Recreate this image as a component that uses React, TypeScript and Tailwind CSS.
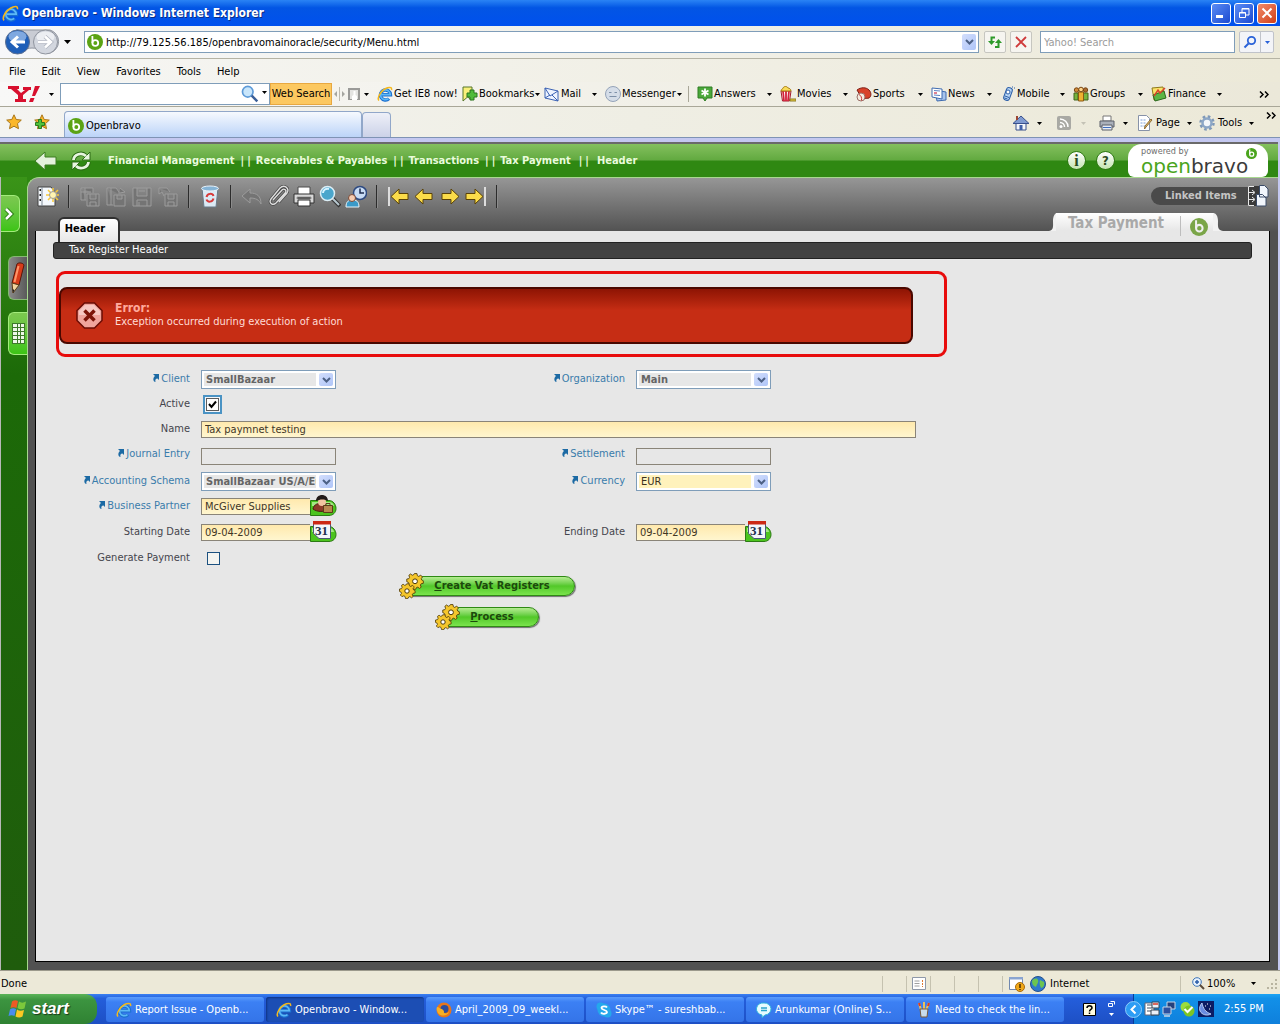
import type { ReactNode } from 'react'
import clsx from 'clsx'

/* ---------- Small shared pieces ---------- */

function Svg({ w = 16, h = 16, box, className, children }: { w?: number; h?: number; box?: string; className?: string; children: ReactNode }) {
  return (
    <svg width={w} height={h} viewBox={box ?? `0 0 ${w} ${h}`} fill="none" className={clsx('shrink-0', className)} aria-hidden="true">
      {children}
    </svg>
  )
}

function Caret({ className = 'text-black' }: { className?: string }) {
  return (
    <Svg w={5} h={3} className={className}>
      <path d="M0 0h5L2.500 3z" fill="currentColor" />
    </Svg>
  )
}

function IeIcon({ size = 16 }: { size?: number }) {
  return (
    <Svg w={size} h={size} box="0 0 16 16">
      <path d="M4 8.800h9.500A5 5 0 1 0 12 12.600" stroke="#1a6fd0" strokeWidth="3.400" />
      <path d="M4.500 8.600h8.800A4.900 4.900 0 1 0 11.500 12.600" stroke="#5cb8f6" strokeWidth="1.700" />
      <path d="M2 14.500C-.5 12 4 4 10.500 1.800c3-1 4.500 0 4 2.200" stroke="#f5b81c" strokeWidth="1.500" />
    </Svg>
  )
}

function BravoIcon({ size = 16, color = '#5ba314', mark = '#fff' }: { size?: number; color?: string; mark?: string }) {
  return (
    <Svg w={size} h={size} box="0 0 16 16">
      <circle cx="8" cy="8" r="8" fill={color} />
      <circle cx="8.300" cy="9" r="2.900" stroke={mark} strokeWidth="1.800" />
      <path d="M5.400 9V2" stroke={mark} strokeWidth="1.800" />
    </Svg>
  )
}

function Chevrons() {
  return (
    <Svg w={10} h={7}>
      <path d="M1 .5l3 3-3 3M6 .5l3 3-3 3" stroke="#000" strokeWidth="1.500" />
    </Svg>
  )
}

function DropArrow() {
  return (
    <span className="pointer-events-none absolute top-0.5 right-0.5 bottom-0.5 flex w-[14px] items-center justify-center rounded-xs bg-gradient-to-br from-[#d3defc] to-[#afc5f8]">
      <Svg w={9} h={6}>
        <path d="M1 1l3.500 3.500L8 1" stroke="#4d6185" strokeWidth="2" />
      </Svg>
    </span>
  )
}

/* ---------- Browser chrome ---------- */

function TitleBar() {
  return (
    <header className="flex h-[26px] items-center bg-gradient-to-b from-[#2a83f5] via-[#0355e4] via-30% to-[#0050ee] pr-[3px] pl-0.5">
      <IeIcon size={17} />
      <h1 className="ml-[3px] text-[12px] font-bold text-white [text-shadow:1px_1px_0_#0a2d85]">
        Openbravo - Windows Internet Explorer
      </h1>
      <div className="ml-auto flex gap-[3px]">
        <button aria-label="Minimize" className="flex h-[21px] w-5 items-center justify-center rounded-[3px] border border-white bg-gradient-to-br from-[#5c8cf5] to-[#1c48d0]">
          <Svg w={12} h={12}>
            <path d="M1 8h7v3H1z" fill="#fff" />
          </Svg>
        </button>
        <button aria-label="Restore" className="flex h-[21px] w-5 items-center justify-center rounded-[3px] border border-white bg-gradient-to-br from-[#5c8cf5] to-[#1c48d0]">
          <Svg w={12} h={12}>
            <path d="M4 5V1.500h7V8H8M1.500 5.500h6v5h-6zM4 2h7M1.500 6h6" stroke="#fff" />
          </Svg>
        </button>
        <button aria-label="Close" className="flex h-[21px] w-5 items-center justify-center rounded-[3px] border border-white bg-gradient-to-br from-[#f08a68] to-[#d03c10]">
          <Svg w={12} h={12}>
            <path d="M1.500 1.500l9 9M10.500 1.500l-9 9" stroke="#fff" strokeWidth="2" />
          </Svg>
        </button>
      </div>
    </header>
  )
}

function AddressRow() {
  return (
    <div className="flex h-[33px] items-center border-b border-[#b5b3a4] bg-gradient-to-r from-[#f6f7f9] to-[#ece9d8] pr-1.5 pl-1">
      <button aria-label="Back and forward">
        <Svg w={56} h={28}>
          <path d="M12 2h34a12 12 0 0 1 0 23C37 25 36 20 28 20s-8 5-16 5z" fill="#c9ccd4" stroke="#8f949e" />
          <circle cx="13.500" cy="14" r="12" fill="#1f5fb8" stroke="#5b6f92" />
          <ellipse cx="13.500" cy="8.500" rx="9" ry="5.500" fill="#7fa8e0" />
          <path d="M21 14H9M14 8.500L8 14l6 5.500" stroke="#fff" strokeWidth="3" />
          <circle cx="41.500" cy="14" r="12" fill="#d3d7df" stroke="#8f949e" />
          <ellipse cx="41.500" cy="9" rx="9" ry="5.500" fill="#eceef2" />
          <path d="M34 14h12M41 8.500l6 5.500-6 5.500" stroke="#b0b5c0" strokeWidth="4" />
          <path d="M34 14h12M41 8.500l6 5.500-6 5.500" stroke="#fff" strokeWidth="2.500" />
        </Svg>
      </button>
      <span className="ml-1">
        <Svg w={7} h={4}>
          <path d="M0 0h7L3.500 4z" fill="#000" />
        </Svg>
      </span>
      <label className="relative ml-[13px] flex h-[22px] flex-1 items-center border border-[#7f9db9] bg-white pl-0.5">
        <BravoIcon />
        <input aria-label="Address" className="ml-[3px] h-full flex-1 pr-5 outline-none" defaultValue="http://79.125.56.185/openbravomainoracle/security/Menu.html" />
        <DropArrow />
      </label>
      <button aria-label="Refresh" className="ml-[5px] flex h-[22px] w-[22px] items-center justify-center rounded-xs border border-[#c6c6c0] bg-[#f6f5f0]">
        <Svg>
          <path d="M8 3.500H4.500V8" stroke="#2e9a2a" strokeWidth="2" />
          <path d="M1 7h7l-3.500 4z" fill="#2e9a2a" />
          <path d="M8 13h3.500V8.500" stroke="#2e9a2a" strokeWidth="2" />
          <path d="M8 9h7l-3.500-4z" fill="#2e9a2a" />
        </Svg>
      </button>
      <button aria-label="Stop" className="ml-1 flex h-[22px] w-[22px] items-center justify-center rounded-xs border border-[#c6c6c0] bg-[#f6f5f0]">
        <Svg w={12} h={12}>
          <path d="M1 1l10 10M11 1L1 11" stroke="#cf3b3b" strokeWidth="1.800" />
        </Svg>
      </button>
      <input aria-label="Yahoo! Search" placeholder="Yahoo! Search" className="ml-2 h-[22px] w-[195px] border border-[#7f9db9] bg-white px-[3px] placeholder:text-[#9b9b9b]" />
      <div className="ml-1 flex h-[22px] rounded-xs border border-[#c0c3ca] bg-[#f3f4f8]">
        <button aria-label="Search" className="flex w-[21px] items-center justify-center border-r border-[#c0c3ca]">
          <Svg w={14} h={14}>
            <circle cx="8.500" cy="5.500" r="3.700" stroke="#2a62d8" strokeWidth="1.800" />
            <path d="M5.500 8.500L1.500 12.500" stroke="#2a62d8" strokeWidth="2" />
          </Svg>
        </button>
        <button aria-label="Search options" className="flex w-[12px] items-center justify-center">
          <Caret className="text-[#2a62d8]" />
        </button>
      </div>
    </div>
  )
}

function MenuRow() {
  return (
    <nav className="flex h-[23px] items-center gap-4 bg-gradient-to-r from-[#f6f6f4] to-[#ece9d8] pt-0.5 pl-[9px]">
      {['File', 'Edit', 'View', 'Favorites', 'Tools', 'Help'].map((name) => (
        <button key={name}>{name}</button>
      ))}
    </nav>
  )
}

const yahooIcons: Record<string, ReactNode> = {
  Bookmarks: (
    <>
      <path d="M1 1h9v13l-4.500-3L1 15z" fill="#f9f07a" stroke="#57762a" />
      <path d="M8 4h4v3h3v4h-3v3H8v-3H5V7h3z" fill="#4fbb3a" stroke="#2a7420" />
    </>
  ),
  Mail: (
    <>
      <path d="M1 2l13 3v10L1 12z" fill="#eef4ff" stroke="#3b62b4" />
      <path d="M1 2l5 8 8-5M1 12l5-3M14 15L8 9" stroke="#3b62b4" />
    </>
  ),
  Messenger: (
    <>
      <circle cx="8" cy="8" r="7.500" fill="#d5dde8" stroke="#94a3b8" />
      <path d="M4 6.500h2.500M9.500 6.500H12M4.500 10.500h7" stroke="#7e90a8" strokeWidth="1.200" />
    </>
  ),
  Answers: (
    <>
      <path d="M1 1h14v11h-5l-2 3-2-3H1z" fill="#4aa83a" stroke="#2e7d23" />
      <path d="M8 2.500v8M4.500 4.500l7 4M11.500 4.500l-7 4" stroke="#fff" strokeWidth="1.800" />
    </>
  ),
  Movies: (
    <>
      <path d="M1 5h10l-1.500 10h-7z" fill="#fff" stroke="#a01828" />
      <path d="M3 5l1 10M6 5v10M9 5L8 15" stroke="#d3213a" strokeWidth="1.800" />
      <path d="M1 5c0-2 2-2 2-3 1-2 4-2 5 0 1 0 3 1 3 3z" fill="#f8dc5a" stroke="#a87a10" />
      <path d="M10 13h6v2h-6z" fill="#f0d040" stroke="#8a7a20" />
    </>
  ),
  Sports: (
    <>
      <path d="M1 4c4-3 9-3 12 0 3 3 2 7 0 8-3 1-8 0-9-3z" fill="#d8432a" stroke="#7c1c14" />
      <circle cx="5" cy="11" r="4" fill="#f4ecdf" stroke="#9a7068" />
      <path d="M3 8.500c2 1 3 3 2.500 6" stroke="#c33" />
    </>
  ),
  News: (
    <>
      <path d="M4 4l11 2v8L6 15z" fill="#a9c4ec" stroke="#3e6bb0" />
      <path d="M1 2l10 1v10L1 11z" fill="#fff" stroke="#3e6bb0" />
      <path d="M3 4.500l6 .5M3 9l6 .5" stroke="#5c83c4" />
      <path d="M3 6h3v2H3z" fill="#e08090" />
    </>
  ),
  Mobile: (
    <>
      <rect x="5" y="1.500" width="6" height="13" rx="2.500" transform="rotate(20 8 8)" fill="#b7d4f4" stroke="#2c5fa8" />
      <circle cx="8" cy="6" r="2" fill="#fff" stroke="#2c5fa8" />
      <path d="M5 10l4 1.500M4.500 12l3 1M12 1h1M14 2h1" stroke="#2c5fa8" />
    </>
  ),
  Groups: (
    <>
      <path d="M1 7h4v7H1zM10 7h5v7h-5z" fill="#78b43c" stroke="#41641c" />
      <path d="M5.500 6h5v9h-5z" fill="#f0b030" stroke="#8a5a14" />
      <circle cx="3.500" cy="4" r="2.200" fill="#d08a3a" stroke="#7a4612" />
      <circle cx="8" cy="3.500" r="2.300" fill="#ffd48a" stroke="#7a4612" />
      <circle cx="12.500" cy="4" r="2.200" fill="#a86830" stroke="#7a4612" />
    </>
  ),
  Finance: (
    <>
      <path d="M1 2l11-1 2 11-11 2z" fill="#fbe36a" stroke="#8f7a18" />
      <path d="M2 9l11-4 2 7-11 3z" fill="#5cb544" stroke="#2d6a20" />
      <path d="M3 10l4-6 2 3 5-5" stroke="#d8432a" strokeWidth="1.500" />
    </>
  ),
}

const yahooItems = [
  { name: 'Bookmarks', width: 'w-[82px]', tight: true },
  { name: 'Mail', width: 'w-[61px]' },
  { name: 'Messenger', width: 'w-[83px]', tight: true, divider: true },
  { name: 'Answers', width: 'w-[83px]' },
  { name: 'Movies', width: 'w-[76px]' },
  { name: 'Sports', width: 'w-[75px]' },
  { name: 'News', width: 'w-[69px]' },
  { name: 'Mobile', width: 'w-[73px]' },
  { name: 'Groups', width: 'w-[78px]' },
  { name: 'Finance', width: 'w-[79px]' },
]

function YahooBar() {
  return (
    <div className="flex h-[25px] items-center border-b border-[#a9a798] bg-gradient-to-r from-[#f8f8f7] to-[#ebe8d9] pr-[11px]">
      <Svg w={32} h={18} className="ml-2">
        <path d="M0 1h11v3H9l4 4 4-3h-2V2h8v3h-2l-6 5v4h3v3H7v-3h3v-4L3 4H0z" fill="#d8102e" />
        <path d="M27 1h5l-5 10h-3zM22.500 13h4l-1.500 4h-4z" fill="#d8102e" />
      </Svg>
      <span className="ml-[9px]">
        <Caret />
      </span>
      <div className="ml-1.5 flex h-[22px] items-center border border-[#7f9db9] bg-white">
        <input aria-label="Yahoo web search" className="h-full w-[180px] outline-none" />
        <Svg className="h-[18px] w-[18px]">
          <circle cx="6" cy="6" r="4.700" fill="#c9e6fb" stroke="#5e9bd8" strokeWidth="1.500" />
          <path d="M9.500 9.500l5 5" stroke="#3a5f98" strokeWidth="2.200" />
        </Svg>
        <span className="mr-0.5 ml-[3px] -mt-1">
          <Caret />
        </span>
      </div>
      <button className="h-[22px] w-[62px] border border-[#e8a840] bg-[#fcc860] whitespace-nowrap">Web Search</button>
      <Svg w={11} h={14} className="ml-[2px]">
        <path d="M3 4L0 7l3 3zM8 4l3 3-3 3z" fill="#a5a5a0" />
        <path d="M5.500 0v14" stroke="#bcbab0" />
      </Svg>
      <Svg w={12} h={12} className="ml-[3px]">
        <path d="M0 0h12v12H0z" fill="#9a9a98" />
        <path d="M2 2h8v9H2z" fill="#e4e4e2" />
        <path d="M4 12V8l1.500-1V3h2v4L9 8v4" fill="#fff" />
      </Svg>
      <span className="ml-1">
        <Caret />
      </span>
      <button className="ml-2 flex w-[85px] items-center gap-px whitespace-nowrap">
        <IeIcon />
        Get IE8 now!
      </button>
      {yahooItems.map((item) => (
        <div key={item.name} className={clsx('flex', item.divider && 'mr-2 border-r border-[#a9a798]')}>
          <button className={clsx('flex items-center text-left', item.tight ? 'pr-0.5' : 'pr-2', item.width)}>
            <Svg>{yahooIcons[item.name]}</Svg>
            <span className="ml-px">{item.name}</span>
            <span className={item.tight ? 'ml-px' : 'ml-auto'}>
              <Caret />
            </span>
          </button>
        </div>
      ))}
      <span className="ml-auto">
        <Chevrons />
      </span>
    </div>
  )
}

function Star({ plus }: { plus?: boolean }) {
  return (
    <Svg>
      <path d="M8 .8l2.200 4.700 5.100.6-3.800 3.500 1 5.100L8 12.200l-4.500 2.500 1-5.100L.7 6.100l5.100-.6z" fill="#fbb72a" stroke="#a9761a" />
      {plus && <path d="M4.500 5.500h3v3h3v3h-3v3h-3v-3h-3v-3h3z" fill="#4fc23a" stroke="#2c7a1e" />}
    </Svg>
  )
}

function TabRow() {
  return (
    <div className="flex h-[31px] border-b border-[#7f93b4] bg-gradient-to-r from-[#f4f4f1] via-[#efeee4] to-[#ece9d8] pl-1.5">
      <button aria-label="Favorites Center" className="flex w-7 items-center">
        <Star />
      </button>
      <button aria-label="Add to Favorites" className="flex w-[30px] items-center">
        <Star plus />
      </button>
      <button className="mt-1 flex w-[298px] items-center gap-0.5 rounded-t-sm border border-b-0 border-[#91a7c9] bg-gradient-to-b from-[#f6f9fe] to-[#bcd4f8] pt-0.5 pl-[3px]">
        <BravoIcon />
        Openbravo
      </button>
      <button aria-label="New tab" className="mt-[5px] w-[29px] rounded-t-sm border border-b-0 border-[#91a7c9] bg-gradient-to-b from-[#eef0f8] to-[#ccd2e8]" />
      <div className="ml-auto flex items-center pt-0.5 pr-1">
        <button aria-label="Home" className="flex w-11 items-center gap-2">
          <Svg>
            <path d="M3 8v7h10V8" fill="#f4f6fa" stroke="#39508c" />
            <path d="M0 8.500L8 1l8 7.500z" fill="#7f9ad0" stroke="#39508c" />
            <path d="M3 1h2v4H3z" fill="#9c4632" />
            <path d="M6.500 10h3v5h-3z" fill="#4060a8" />
          </Svg>
          <Caret />
        </button>
        <button aria-label="Feeds" className="flex w-[42px] items-center gap-2.5">
          <Svg w={14} h={14}>
            <rect width="14" height="14" rx="2" fill="#a9a9a4" />
            <circle cx="4" cy="10.500" r="1.500" fill="#fff" />
            <path d="M3 6.500a4.500 4.500 0 0 1 4.500 4.500M3 3a8 8 0 0 1 8 8" stroke="#fff" strokeWidth="1.500" />
          </Svg>
          <Caret className="text-[#c4c2b6]" />
        </button>
        <button aria-label="Print" className="flex w-[38px] items-center gap-2">
          <Svg>
            <path d="M4 1h8v5H4z" fill="#fff" stroke="#777" />
            <path d="M1 6h14v6H1z" fill="#aab0ba" stroke="#5a5f68" />
            <path d="M3 10h10v5H3z" fill="#e8ecf4" stroke="#5a5f68" />
            <path d="M4 12.500h8" stroke="#4070c0" />
          </Svg>
          <Caret />
        </button>
        <button className="flex w-[62px] items-center gap-[3px]">
          <Svg>
            <path d="M1.500.500h8l3 3v12h-11z" fill="#fff" stroke="#8792a8" />
            <path d="M3.500 5h6M3.500 8h5M3.500 11h5" stroke="#7da0d8" strokeDasharray="2 1" />
            <path d="M15 5l-6 7-1.500 2 .5-3 6-7z" fill="#e8c070" stroke="#8c6a30" />
          </Svg>
          Page
          <span className="ml-1">
            <Caret />
          </span>
        </button>
        <button className="flex w-[67px] items-center gap-[3px]">
          <Svg>
            <circle cx="8" cy="8" r="6.500" stroke="#7e98b8" strokeWidth="2.500" strokeDasharray="2.600 2.500" />
            <circle cx="8" cy="8" r="4.500" fill="#f3f6fa" stroke="#8ca6c6" strokeWidth="2.500" />
          </Svg>
          Tools
          <span className="ml-1">
            <Caret />
          </span>
        </button>
        <span className="mb-4">
          <Chevrons />
        </span>
      </div>
    </div>
  )
}

/* ---------- Openbravo application ---------- */

const crumbs = ['Financial Management', 'Receivables & Payables', 'Transactions', 'Tax Payment', 'Header']

function AppHeader() {
  return (
    <div className="flex h-[33px] items-center bg-gradient-to-b from-[#84c05e] via-[#62aa40] via-48% to-[#2f8812] to-52%">
      <button aria-label="Go back" className="ml-[34px]">
        <Svg w={24} h={22}>
          <path d="M1 11L11 2v5h11v8H11v5z" fill="#e4f2dc" stroke="#3c7c22" />
        </Svg>
      </button>
      <button aria-label="Refresh page" className="ml-[13px]">
        <Svg w={20} h={20}>
          <path d="M2.500 9C3 3 11 1 15 5M17.500 11c-.5 6-8.500 8-12.500 4" stroke="#2c6a14" strokeWidth="4.500" />
          <path d="M19 1v8h-8zM1 19v-8h8z" fill="#e8f5e0" stroke="#2c6a14" />
          <path d="M2.500 9C3 3 11 1 15 5M17.500 11c-.5 6-8.500 8-12.500 4" stroke="#e8f5e0" strokeWidth="2.800" />
        </Svg>
      </button>
      <nav className="ml-[17px] flex gap-1.5 font-bold text-[#e9fbdc]">
        {crumbs.map((crumb, i) => (
          <span key={crumb} className={clsx('flex whitespace-nowrap', i === crumbs.length - 1 ? 'gap-2 pl-0.5' : 'gap-[5px]')}>
            {i > 0 && (
              <span className="flex gap-[3px]">
                <span>|</span>
                <span>|</span>
              </span>
            )}
            <a href="#">{crumb}</a>
          </span>
        ))}
      </nav>
      <div className="ml-auto flex items-center gap-2.5">
        <button aria-label="About" className="flex h-[19px] w-[19px] items-center justify-center rounded-full border border-[#2f7a14] bg-gradient-to-b from-white to-[#c4e4b0] font-['Liberation_Serif'] text-[16px] leading-4 font-bold text-[#2b4a1c]">
          i
        </button>
        <button aria-label="Help" className="flex h-[19px] w-[19px] items-center justify-center rounded-full border border-[#2f7a14] bg-gradient-to-b from-white to-[#c4e4b0] text-[13px] font-bold text-[#2b4a1c]">
          ?
        </button>
      </div>
      <div className="mr-2.5 ml-[13px] flex h-[33px] w-[140px] items-start rounded-[14px] rounded-b-md bg-white pl-[13px] text-[#3b3b3b]">
        <div className="flex flex-col pt-0.5">
          <span className="text-[9px] leading-[10px] text-[#6d6d6d]">powered by</span>
          <span className="font-['DejaVu_Sans'] text-[20px] leading-[20px]">
            <span className="text-[#4aa41c]">open</span>bravo
          </span>
        </div>
        <span className="mt-1 -ml-0.5">
          <BravoIcon size={11} color="#4aa41c" />
        </span>
      </div>
    </div>
  )
}

function Sidebar() {
  return (
    <aside className="flex w-[27px] shrink-0 flex-col border-l border-[#b8b8b8] bg-gradient-to-b from-[#3a9418] via-[#1c6a08] via-25% to-[#1f5c0c]">
      <button aria-label="Expand menu" className="mt-[18px] flex h-[37px] w-[19px] items-center justify-center rounded-r-md border border-l-0 border-[#a3ec7c] bg-gradient-to-b from-[#7cc850] to-[#3cc414]">
        <Svg w={12} h={14}>
          <path d="M2 2l5 5-5 5" stroke="#2c7a14" strokeWidth="4.500" />
          <path d="M2 2l5 5-5 5" stroke="#fff" strokeWidth="2.500" />
        </Svg>
      </button>
      <button aria-label="Edit view" className="mt-6 ml-[7px] flex h-11 items-center justify-center rounded-l-md border border-r-0 border-[#86b873] bg-gradient-to-r from-[#8a8a8a] to-[#5a5a5a]">
        <Svg w={18} h={34}>
          <path d="M8 3c2-2 6-1 7 1l-5 20-7-2z" fill="#d83c1a" stroke="#5c1406" />
          <path d="M9.500 5L5.500 21" stroke="#ff9468" strokeWidth="2" />
          <path d="M3 22l7 2-6 8z" fill="#f2d4a0" stroke="#5c3c18" />
          <path d="M3.500 28l2 1-1.500 3z" fill="#222" />
        </Svg>
      </button>
      <button aria-label="Grid view" className="mt-3 ml-[7px] flex h-[43px] items-center justify-center rounded-l-md border border-r-0 border-[#a3ec7c] bg-gradient-to-b from-[#7cc850] to-[#3cc414]">
        <Svg w={13} h={21}>
          <path d="M0 0h13v21H0z" fill="#3d7a2a" />
          <path d="M1 1h4v3H1zM6 1h2v3H6zM9 1h3v3H9zM1 5h4v3H1zM6 5h2v3H6zM9 5h3v3H9zM1 9h4v3H1zM6 9h2v3H6zM9 9h3v3H9zM1 13h4v3H1zM6 13h2v3H6zM9 13h3v3H9zM1 17h4v3H1zM6 17h2v3H6zM9 17h3v3H9z" fill="#eef8e8" />
        </Svg>
      </button>
    </aside>
  )
}

const arrowLeft = 'M2 11.500L10 4v4.500h9v6h-9V19z'
const arrowRight = 'M20 11.500L12 4v4.500H3v6h9V19z'

const toolIcons: Record<string, ReactNode> = {
  'New record': (
    <>
      <path d="M1 2h13l4 5v14H1z" fill="#f4f8fc" stroke="#404040" />
      <path d="M5 2v19" stroke="#7c8894" />
      <path d="M2.500 5h1.500M2.500 10h1.500M2.500 15h1.500" stroke="#222" strokeWidth="2" />
      <path d="M16 3v14M9 10h14M11 5l10 10M21 5L11 15" stroke="#f7c93a" strokeWidth="1.500" />
      <circle cx="16" cy="10" r="3.500" fill="#fff4b0" />
    </>
  ),
  'Save and new': <path d="M2 3h12v5M2 3v12h5M2 7h10M6 3v12M8 9h12v12H8zM11 9v5h6V9M11 21v-4h6v4" />,
  'Save and next': <path d="M2 3h9l3 4v2M2 3v17h6M6 3v17M9 10h11v11H9zM12 10v4h5v-4M15 3l5 4-5 1" />,
  Save: <path d="M2 3h18v18H2zM6 3v8h10V3M6 21v-6h10v6M8 6h6M8 17v4" />,
  'Save and close': <path d="M8 9h12v12H8zM11 9v5h6V9M11 21v-4h6v4M2 3h8l3 4M2 3v6l3-2 2 4" />,
  Delete: (
    <>
      <path d="M3 3h16l-2 19H5z" fill="#dbeaf5" stroke="#6a7a88" />
      <ellipse cx="11" cy="3.500" rx="8.500" ry="2.500" fill="#86b4d6" stroke="#e8f2fa" />
      <path d="M7.500 12c1-4 6-4 7-1M14.500 13.500c-1 4-6 4-7 1" fill="none" stroke="#d83a3a" strokeWidth="2" />
    </>
  ),
  Undo: <path d="M1 11l8-7v4c7 0 11 3 11 11-2-4-5-6-11-6v5z" />,
  Attach: (
    <g fill="none">
      <path d="M6 15l9-10c2-2 5 0 3.500 2.500L9 18c-3 3-8 0-5-4L13 3c4-4 10 0 7 5l-8 9" stroke="#444" strokeWidth="2.800" />
      <path d="M6 15l9-10c2-2 5 0 3.500 2.500L9 18c-3 3-8 0-5-4L13 3c4-4 10 0 7 5l-8 9" stroke="#dedede" strokeWidth="1.400" />
    </g>
  ),
  Print: (
    <>
      <path d="M5 2h12v8H5z" fill="#fff" stroke="#4a4a4a" />
      <path d="M1 9h20v9H1z" fill="#d8d8d8" stroke="#333" />
      <path d="M4 12h14v2H4z" fill="#222" />
      <path d="M5 15h12v6H5z" fill="#fff" stroke="#333" />
    </>
  ),
  Search: (
    <>
      <path d="M13 13l8 8" stroke="#333" strokeWidth="4" />
      <path d="M13 13l7 7" stroke="#b8c8d0" strokeWidth="2" />
      <circle cx="8.500" cy="8.500" r="7" fill="#4aa6cc" stroke="#dceef6" strokeWidth="1.500" />
      <path d="M4 8c0-3 3-5 6-4" fill="none" stroke="#d4f2ff" strokeWidth="2" />
    </>
  ),
  Audit: (
    <>
      <circle cx="15" cy="8" r="6.500" fill="#c8dcf4" stroke="#2e4a80" strokeWidth="1.500" />
      <path d="M15 3.500V8h4" fill="none" stroke="#1c2c50" strokeWidth="1.500" />
      <path d="M1 22c0-6 3-7 6.500-7s6.500 1 6.500 7z" fill="#3b9ac8" stroke="#e8f4fa" />
      <circle cx="7" cy="13" r="3.500" fill="#f6ccb0" stroke="#7a4a38" />
    </>
  ),
  First: (
    <>
      <path d="M2 2v19" stroke="#ddd" strokeWidth="2" />
      <path d="M4 11.500L12 4v4.500h9v6h-9V19z" fill="#fbdc4a" stroke="#5a4206" />
    </>
  ),
  Previous: <path d={arrowLeft} fill="#fbdc4a" stroke="#5a4206" />,
  Next: <path d={arrowRight} fill="#fbdc4a" stroke="#5a4206" />,
  Last: (
    <>
      <path d="M18 11.500L10 4v4.500H1v6h9V19z" fill="#fbdc4a" stroke="#5a4206" />
      <path d="M20 2v19" stroke="#ddd" strokeWidth="2" />
    </>
  ),
}

const toolGroups = [
  ['New record'],
  ['Save and new', 'Save and next', 'Save', 'Save and close'],
  ['Delete'],
  ['Undo', 'Attach', 'Print', 'Search', 'Audit'],
  ['First', 'Previous', 'Next', 'Last'],
]

function Toolbar() {
  return (
    <div className="flex h-9 items-center pl-[7px]">
      {toolGroups.map((group) => (
        <div key={group[0]} className="flex items-center">
          {group.map((name) => (
            <button key={name} aria-label={name} className="flex w-[26px] justify-center">
              <Svg w={22} h={23}>
                <g stroke="#9c9c9c" fill="#747474">
                  {toolIcons[name]}
                </g>
              </Svg>
            </button>
          ))}
          <span className="mx-[7px] h-[23px] w-0.5 border-l border-[#2c2c2c] bg-[#8c8c8c]" />
        </div>
      ))}
      <button className="mr-[9px] ml-auto flex items-center">
        <span className="flex h-[18px] w-[97px] items-center rounded-l-full bg-[#4a4a4a] pl-[14px] font-bold whitespace-nowrap text-[#c4c4c4]">Linked Items</span>
        <Svg w={21} h={22}>
          <path d="M0 1h11v20H0z" fill="#3a3a3a" />
          <path d="M6 1.500H.500v19H6M1 7.500h5M1 14.500h5M4 5l3 2.500L4 10M4 12l3 2.500L4 17" stroke="#e8e8e8" />
          <path d="M11.500.500h5l3.500 3.500v8h-8.500zM8.500 9.500h6l3.500 3.500v8H8.500z" fill="#f2f6fc" stroke="#3c4c68" />
        </Svg>
      </button>
    </div>
  )
}

function TabStrip() {
  return (
    <div className="relative -mt-[18px] flex items-start justify-between pr-[46px] pl-[22px]">
      <button className="mt-1 h-[25px] w-[62px] rounded-t-md border-2 border-b-0 border-[#303030] bg-gradient-to-b from-white to-[#e7e7e7] pr-2 pb-1 font-bold text-black">
        Header
      </button>
      <div className="flex h-[25px] items-start">
        <Svg w={8} h={18} className="-mr-px">
          <path d="M8 0v18H0c5-1 4-5 4-10 0-5 2-8 4-8z" fill="#f2f2f2" />
        </Svg>
        <div className="flex h-[25px] w-[158px] items-center bg-gradient-to-b from-white to-[#e7e7e7] to-70% pl-3">
          <h2 className="w-[108px] pb-[6px] text-[15px] font-bold whitespace-nowrap text-[#a9a9a9]">Tax Payment</h2>
          <span className="ml-1 flex h-5 items-center border-l border-[#bdbdbd] pt-0.5 pl-[9px]">
            <BravoIcon size={18} color="#7aa548" mark="#f0f0f0" />
          </span>
        </div>
        <Svg w={10} h={18} className="-ml-px">
          <path d="M0 0v18h10c-6-1-5-5-5-10 0-5-2-8-5-8z" fill="#f2f2f2" />
        </Svg>
      </div>
    </div>
  )
}

function ErrorBox() {
  return (
    <div className="mt-3 ml-5 h-[86px] w-[891px] rounded-[9px] border-[3px] border-[#e80c0c] pt-[13px]">
      <div role="alert" className="flex h-[57px] w-[854px] items-center gap-3 rounded-lg border-2 border-[#4a0800] bg-gradient-to-b from-[#8e1404] via-[#c62d14] via-40% to-[#c62d14] pb-px pl-[15px]">
        <Svg w={27} h={27}>
          <path d="M8.500 1h10l7.500 7.500v10L18.500 26h-10L1 18.500v-10z" fill="#f0a49c" stroke="#6a0c04" strokeWidth="1.500" />
          <path d="M9 3h9l6 6v4H3V9z" fill="#f7c8c2" />
          <path d="M8.500 8.500l10 10M18.500 8.500l-10 10" stroke="#7c1408" strokeWidth="3.500" />
        </Svg>
        <div className="leading-[14px] text-[#ffdcd6]">
          <p className="text-[12px] font-bold text-[#ffaa9c]">Error:</p>
          <p>Exception occurred during execution of action</p>
        </div>
      </div>
    </div>
  )
}

function Label({ htmlFor, link, children }: { htmlFor: string; link?: boolean; children: string }) {
  return (
    <label htmlFor={htmlFor} className={clsx('flex items-center justify-end gap-0.5 pr-px pb-0.5 whitespace-nowrap', link ? 'text-[#3a7cab]' : 'text-[#45454d]')}>
      {link && (
        <Svg w={7} h={9}>
          <path d="M1 0h6v6L5.500 4.500C3.500 4.500 3 6 3.500 8 1 7.500.5 4 3 2z" fill="#1c6aa4" />
        </Svg>
      )}
      {link ? <a href="#">{children}</a> : children}
    </label>
  )
}

function SelectField({ id, value, className, locked }: { id: string; value: string; className?: string; locked?: boolean }) {
  return (
    <div className={clsx('relative h-[19px] border border-[#7f9db9] bg-white p-0.5', className)}>
      <select
        id={id}
        className={clsx(
          'h-[13px] w-[112px] appearance-none overflow-hidden pl-0.5 leading-[13px] outline-none',
          locked ? 'bg-[#e7e7e7] font-bold text-[#656565]' : 'bg-[#fff2bc] text-[#3a3020]',
        )}
      >
        <option>{value}</option>
      </select>
      <DropArrow />
    </div>
  )
}

const textField = 'h-[17px] border border-[#8a8478] px-[3px] text-[#3f3626] outline-none'
const requiredFill = 'bg-gradient-to-b from-[#ffe9ad] to-[#fff6cf]'

function LookupField({ id, value, kind }: { id: string; value: string; kind: 'date' | 'partner' }) {
  return (
    <div className="flex items-center">
      <input id={id} defaultValue={value} className={clsx(textField, requiredFill, 'w-[109px] border-r-0')} />
      <button aria-label={kind === 'date' ? 'Open calendar' : 'Find business partner'} className="-mt-1.5 -mb-1">
        <Svg w={27} h={24}>
          <path d="M.5 6.500H19c4 0 7 4 7 8s-3 7-7 7H.500z" fill="#4cc41e" stroke="#2c7a14" />
          <path d="M2 8h17c3 0 5 2 5 4H2z" fill="#a4e884" />
          {kind === 'date' ? (
            <>
              <path d="M3.500 3.500h17v15H9l-5.500-5z" fill="#f4f6fa" stroke="#4a5878" />
              <path d="M3 1h18v3.500H3z" fill="#cc2814" />
              <text x="5" y="15" fontSize="13" fontWeight="bold" fontFamily="Liberation Serif, serif" fill="#22304e">
                31
              </text>
            </>
          ) : (
            <>
              <path d="M3 15c1-5 5-6 9-5 4 0 6 2 6 6-5 2-11 2-15-1z" fill="#8c3a28" stroke="#4a1a10" />
              <circle cx="12" cy="8" r="4" fill="#f2c4a0" />
              <path d="M6 7c0-8 12-8 12 0-3-2-8-2-12 0z" fill="#221a18" />
              <path d="M13.500 11.500h9v7h-9z" fill="#b88850" stroke="#5c3c18" />
              <path d="M16 11.500v-2h4v2" stroke="#5c3c18" />
            </>
          )}
        </Svg>
      </button>
    </div>
  )
}

const gear =
  'M14 1h3l.5 2.500 1.500.8L21.500 3 23.500 5l-1.500 2 .5 1.500 2 1v3l-2.500.500-1 1.500 1 2.500-2 1.500-2-1.500-1.500.5-1 2h-3l-.5-2.500-1.500-1-2.500 1L6 15l1.500-2L7 11.500 5 10.500v-3L7.500 7l.8-1.500L7.500 3l2-1.500 2 1.500 1.500-.5z'

function ProcessButton({ first, rest }: { first: string; rest: string }) {
  return (
    <button className="flex h-[26px] items-center font-bold text-[#1c4a0c]">
      <Svg w={25} h={26} className="z-10 -mr-3">
        <g stroke="#4e3a08" fill="#f5c62c">
          <path d={gear} transform="translate(3.500 -.3) scale(.85)" />
          <circle cx="16" cy="8.300" r="2.400" fill="#fff" />
          <path d={gear} transform="translate(-3.500 10) scale(.8)" />
          <circle cx="8" cy="18" r="2.200" fill="#fff" />
        </g>
      </Svg>
      <span className="flex h-5 items-center rounded-r-full border border-[#2f8a14] bg-gradient-to-b from-[#b4ec90] via-[#52c828] via-50% to-[#7ae44c] pr-6 pl-[21px] shadow-[1px_1px_1px_#707070]">
        <span className="underline">{first}</span>
        {rest}
      </span>
    </button>
  )
}

function TaxForm() {
  return (
    <form className="mt-[10px] grid auto-rows-[25px] grid-cols-[155px_135px_300px_135px] items-center" onSubmit={(e) => e.preventDefault()}>
      <Label htmlFor="client" link>Client</Label>
      <SelectField id="client" value="SmallBazaar" className="ml-2.5 -mr-2.5" locked />
      <Label htmlFor="organization" link>Organization</Label>
      <SelectField id="organization" value="Main" className="ml-2.5 -mr-2.5" locked />

      <div className="col-start-1">
        <Label htmlFor="active">Active</Label>
      </div>
      <div className="ml-3 grid h-[19px] w-[19px] place-items-center border-2 border-[#4a93c4] bg-[#f4f6fa]">
        <input id="active" type="checkbox" defaultChecked className="peer col-start-1 row-start-1 h-[13px] w-[13px] appearance-none border border-[#5c5c5c] bg-white" />
        <Svg w={9} h={9} className="pointer-events-none col-start-1 row-start-1 hidden peer-checked:block">
          <path d="M1 4l2.500 3L8 1.500" stroke="#000" strokeWidth="2" />
        </Svg>
      </div>

      <div className="col-start-1">
        <Label htmlFor="name">Name</Label>
      </div>
      <input id="name" defaultValue="Tax paymnet testing" className={clsx(textField, requiredFill, 'col-span-3 ml-2.5 w-[715px]')} />

      <Label htmlFor="journal" link>Journal Entry</Label>
      <input id="journal" readOnly className={clsx(textField, 'mt-1 ml-2.5 w-[135px] bg-[#e7e7e7]')} />
      <Label htmlFor="settlement" link>Settlement</Label>
      <input id="settlement" readOnly className={clsx(textField, 'mt-1 ml-2.5 w-[135px] bg-[#e7e7e7]')} />

      <div className="col-start-1 mt-1">
        <Label htmlFor="schema" link>Accounting Schema</Label>
      </div>
      <SelectField id="schema" value="SmallBazaar US/A/Euro" className="mt-1 ml-2.5 -mr-2.5" locked />
      <div className="mt-1">
        <Label htmlFor="currency" link>Currency</Label>
      </div>
      <SelectField id="currency" value="EUR" className="mt-1 ml-2.5 -mr-2.5" />

      <div className="col-start-1 mt-1">
        <Label htmlFor="partner" link>Business Partner</Label>
      </div>
      <div className="mt-1 ml-2.5">
        <LookupField id="partner" value="McGiver Supplies" kind="partner" />
      </div>

      <div className="col-start-1 mt-1.5">
        <Label htmlFor="start">Starting Date</Label>
      </div>
      <div className="mt-1.5 ml-2.5">
        <LookupField id="start" value="09-04-2009" kind="date" />
      </div>
      <div className="mt-1.5">
        <Label htmlFor="end">Ending Date</Label>
      </div>
      <div className="mt-1.5 ml-2.5">
        <LookupField id="end" value="09-04-2009" kind="date" />
      </div>

      <div className="col-start-1 mt-2">
        <Label htmlFor="generate">Generate Payment</Label>
      </div>
      <input id="generate" type="checkbox" className="mt-2 ml-4 h-[13px] w-[13px] appearance-none border border-[#1c5180] bg-[#f4f4f0]" />

      <div className="col-span-3 col-start-2 row-span-3 flex flex-col items-center gap-[5px] self-start pt-1.5 pl-[22px]">
        <ProcessButton first="C" rest="reate Vat Registers" />
        <ProcessButton first="P" rest="rocess" />
      </div>
    </form>
  )
}

function Workspace() {
  return (
    <div className="flex flex-1 flex-col rounded-tl-xl border-t border-l border-[#a8d890] bg-[#515151] bg-[linear-gradient(#969696,#515151_54px)] pb-2">
      <Toolbar />
      <div className="mt-[17px] mr-2 ml-[7px] flex-1 border border-t-0 border-black bg-[#e7e7e7]">
        <TabStrip />
        <div className="mx-[17px] h-[17px] rounded-[3px] border border-[#222] bg-[#424242] pl-[15px] leading-[14px] text-white">Tax Register Header</div>
        <ErrorBox />
        <TaxForm />
      </div>
    </div>
  )
}

/* ---------- Status bar and taskbar ---------- */

function StatusBar() {
  return (
    <footer className="flex h-6 items-center border-t border-[#9c9a8c] bg-[#ece9d8] pt-0.5 pr-0.5 pl-px">
      <span>Done</span>
      <div className="ml-auto flex h-4 items-center">
        <span className="h-full w-6 border-l border-[#c5c2b0]" />
        <span className="flex h-full w-6 items-center justify-center border-l border-[#c5c2b0]">
          <Svg w={14} h={13}>
            <path d="M.5.500h13v12H.500z" fill="#fff" stroke="#8e98a8" />
            <path d="M2.500 4h5M2.500 6.500h5M2.500 9h5" stroke="#a0a0a0" />
            <path d="M10.500 3v7" stroke="#e07a30" strokeDasharray="2 1" />
          </Svg>
        </span>
        <span className="h-full w-6 border-l border-[#c5c2b0]" />
        <span className="h-full w-6 border-l border-[#c5c2b0]" />
        <span className="h-full w-6 border-l border-[#c5c2b0]" />
        <span className="flex h-full w-7 items-center justify-center border-l border-[#c5c2b0]">
          <Svg>
            <path d="M.5 1.500h13v12H.500z" fill="#fff" stroke="#7088b0" />
            <path d="M0 1h14v2.500H0z" fill="#8aa4d0" />
            <circle cx="11" cy="11" r="4.500" fill="#f0a818" stroke="#a86a08" />
            <path d="M11 8v4M11 13v1" stroke="#4a2c00" strokeWidth="1.500" />
          </Svg>
        </span>
        <span className="flex h-full w-[150px] items-center gap-1">
          <Svg>
            <circle cx="8" cy="8" r="7.500" fill="#2f78cc" stroke="#24508c" />
            <path d="M2 5c2-3 5-3 6-1s-1 4-2 7c-3-1-4-3-4-6zM10 4l4 2c1 3-1 6-3 6-1-2-2-5-1-8z" fill="#6cc450" />
          </Svg>
          Internet
        </span>
        <button className="flex h-full w-[86px] items-center gap-0.5 border-l border-[#c5c2b0] pl-[11px]">
          <Svg w={13} h={13}>
            <circle cx="5" cy="5" r="4.300" fill="#e8f2fc" stroke="#3c74b8" />
            <path d="M5 3v4M3 5h4" stroke="#2a5ca8" strokeWidth="1.500" />
            <path d="M8 8l4 4" stroke="#5a4a3a" strokeWidth="2" />
          </Svg>
          100%
          <span className="ml-[14px]">
            <Caret />
          </span>
        </button>
        <Svg w={12} h={12}>
          <path d="M9 1h2v2H9zM5 5h2v2H5zM9 5h2v2H9zM1 9h2v2H1zM5 9h2v2H5zM9 9h2v2H9z" fill="#b8b4a0" />
        </Svg>
      </div>
    </footer>
  )
}

const tasks = [
  { title: 'Report Issue - Openb...', icon: <IeIcon /> },
  { title: 'Openbravo - Window...', icon: <IeIcon />, active: true },
  {
    title: 'April_2009_09_weekl...',
    icon: (
      <Svg>
        <circle cx="8" cy="8" r="7.500" fill="#e8761a" />
        <circle cx="8.500" cy="7" r="4" fill="#2c4c9c" />
        <path d="M1 5c2 0 3 2 5 2l2 2c-1 3 3 3 5 1-1 4-8 5-11 1C1 9 0 7 1 5z" fill="#f8b024" />
      </Svg>
    ),
  },
  {
    title: 'Skype™ - sureshbab...',
    icon: (
      <Svg>
        <circle cx="8" cy="8" r="6.500" fill="#24a8ec" />
        <circle cx="4.500" cy="4.500" r="4" fill="#24a8ec" />
        <circle cx="11.500" cy="11.500" r="4" fill="#24a8ec" />
        <path d="M11 5.500C10 4 5.500 4 5.500 6S11 8 11 10s-5 2.500-6 .5" stroke="#fff" strokeWidth="1.800" />
      </Svg>
    ),
  },
  {
    title: 'Arunkumar (Online) S...',
    icon: (
      <Svg>
        <path d="M8 1a6.500 6 0 0 1 1 12l-3 2.500V13A6.500 6 0 0 1 8 1z" fill="#e6fbff" stroke="#30b4dc" />
        <path d="M5 6h6M5 8.500h6" stroke="#28a4cc" strokeWidth="1.500" />
      </Svg>
    ),
  },
  {
    title: 'Need to check the lin...',
    icon: (
      <Svg>
        <path d="M5 8L3 1M8 8V0M10 8l3-7" stroke="#e8c060" strokeWidth="2" />
        <path d="M3 1l1 3M13 1l-1 3" stroke="#d83a2a" strokeWidth="2" />
        <path d="M4 7h8l-1 8H5z" fill="#c8dcec" stroke="#7a5a3a" />
      </Svg>
    ),
  },
]

function Taskbar() {
  return (
    <footer className="flex h-[30px] bg-gradient-to-b from-[#3a80f2] via-[#245edb] via-15% to-[#1d4fc4] text-white">
      <button className="flex w-[97px] items-center gap-1 rounded-r-xl bg-gradient-to-b from-[#5cb458] via-[#3c9440] via-20% to-[#2f8232] pl-2 font-['Liberation_Sans'] text-[17px] font-bold italic [text-shadow:1px_1px_1px_#1a3a1a]">
        <Svg w={20} h={20}>
          <path d="M4 2.500c2-1.500 4-1.500 6-.5L8.500 9C6.500 8 4.500 8 2.500 9z" fill="#ee5a24" />
          <path d="M11 2.500c2 1.500 4.500 1.500 7 0L16.500 9.500c-2.500 1-5 1-7-.5z" fill="#7cc83c" />
          <path d="M2 10.500c2-1.500 4-1.500 6-.5l-1.500 7c-2-1-4-1-6 0z" fill="#4a8cf0" />
          <path d="M9 10.500c2 1.500 4.500 1.500 7 .5l-1.500 6.500c-2.500 1.500-5 1-7 0z" fill="#fcc824" />
        </Svg>
        start
      </button>
      <div className="ml-[9px] flex flex-1 gap-0.5 pt-[3px] pb-0.5">
        {tasks.map((task) => (
          <button
            key={task.title}
            className={clsx(
              'flex w-[158px] items-center gap-[3px] rounded-[3px] pl-2.5 whitespace-nowrap',
              task.active ? 'bg-[#1c4eb4] shadow-[inset_1px_1px_2px_#0f3484]' : 'bg-gradient-to-b from-[#5a9cfc] via-[#3c80f4] via-20% to-[#3474e8]',
            )}
          >
            {task.icon}
            {task.title}
          </button>
        ))}
      </div>
      <div className="flex items-center gap-3 pr-[18px]">
        <Svg w={13} h={13}>
          <path d="M.5.500h12v12H.500z" fill="#fffce0" stroke="#000" />
          <path d="M4 5c0-3 5-3 5 0 0 1.500-2.500 1.500-2.500 3.500M6.500 9.500V11" stroke="#000" strokeWidth="1.500" />
        </Svg>
        <Svg w={7} h={18}>
          <path d="M2.500 1.500h4v3M.5 3.500h4v3h-4z" stroke="#fff" />
          <path d="M1 13h5l-2.500 3z" fill="#fff" />
        </Svg>
      </div>
      <div className="flex w-[147px] items-center gap-0.5 border-l border-[#0a3c98] bg-gradient-to-b from-[#1ca4f4] via-[#1290e8] via-15% to-[#0f80dc]">
        <Svg w={17} h={17} className="-ml-[9px]">
          <circle cx="8.500" cy="8.500" r="8" fill="#2c9cf4" stroke="#8cccfc" />
          <path d="M10.500 4.500l-4 4 4 4" stroke="#fff" strokeWidth="2" />
        </Svg>
        <Svg>
          <path d="M1 2h9v12H1z" fill="#fff" stroke="#667" />
          <path d="M3 4h5M3 7h5M3 10h5" stroke="#456" />
          <path d="M8 1h7v6H8zM7 9h8v5H7z" fill="#e8f0f8" stroke="#345" />
          <path d="M9 3h5" stroke="#d83a2a" strokeWidth="1.500" />
        </Svg>
        <Svg>
          <path d="M5 1h8v7H5z" fill="#24407c" stroke="#c8d4e4" />
          <path d="M1 6h8v7H1z" fill="#2c50a0" stroke="#c8d4e4" />
          <path d="M2 15h6" stroke="#c8d4e4" strokeWidth="1.500" />
        </Svg>
        <Svg>
          <circle cx="5.500" cy="6" r="5" fill="#9cdc3c" />
          <circle cx="9" cy="10" r="5.500" fill="#7cc424" />
          <path d="M4.500 8l3 3 5-5" stroke="#fff" strokeWidth="2" />
        </Svg>
        <Svg>
          <path d="M0 0h16v16H0z" fill="#0c1c64" />
          <path d="M4 2c1 5 3 9 9 11-4 2-9 1-11-3-1-3 0-6 2-8z" fill="#6a8ce0" stroke="#b8ccf4" />
          <path d="M9 3h1M12 5h1M11 8h1M7 5h1" stroke="#fff" />
        </Svg>
        <time className="ml-2 whitespace-nowrap">2:55 PM</time>
      </div>
    </footer>
  )
}

export default function App() {
  return (
    <div className="flex min-h-screen flex-col bg-[#c4c8f0] font-['DejaVu_Sans_Condensed','Noto_Sans',sans-serif] text-[11px] leading-[14px] text-black">
      <TitleBar />
      <AddressRow />
      <MenuRow />
      <YahooBar />
      <TabRow />
      <main className="mt-1 mr-0.5 flex flex-1 flex-col border-t-2 border-[#6a6a6a] bg-[#2f8812]">
        <AppHeader />
        <div className="flex flex-1">
          <Sidebar />
          <Workspace />
        </div>
      </main>
      <StatusBar />
      <Taskbar />
    </div>
  )
}
